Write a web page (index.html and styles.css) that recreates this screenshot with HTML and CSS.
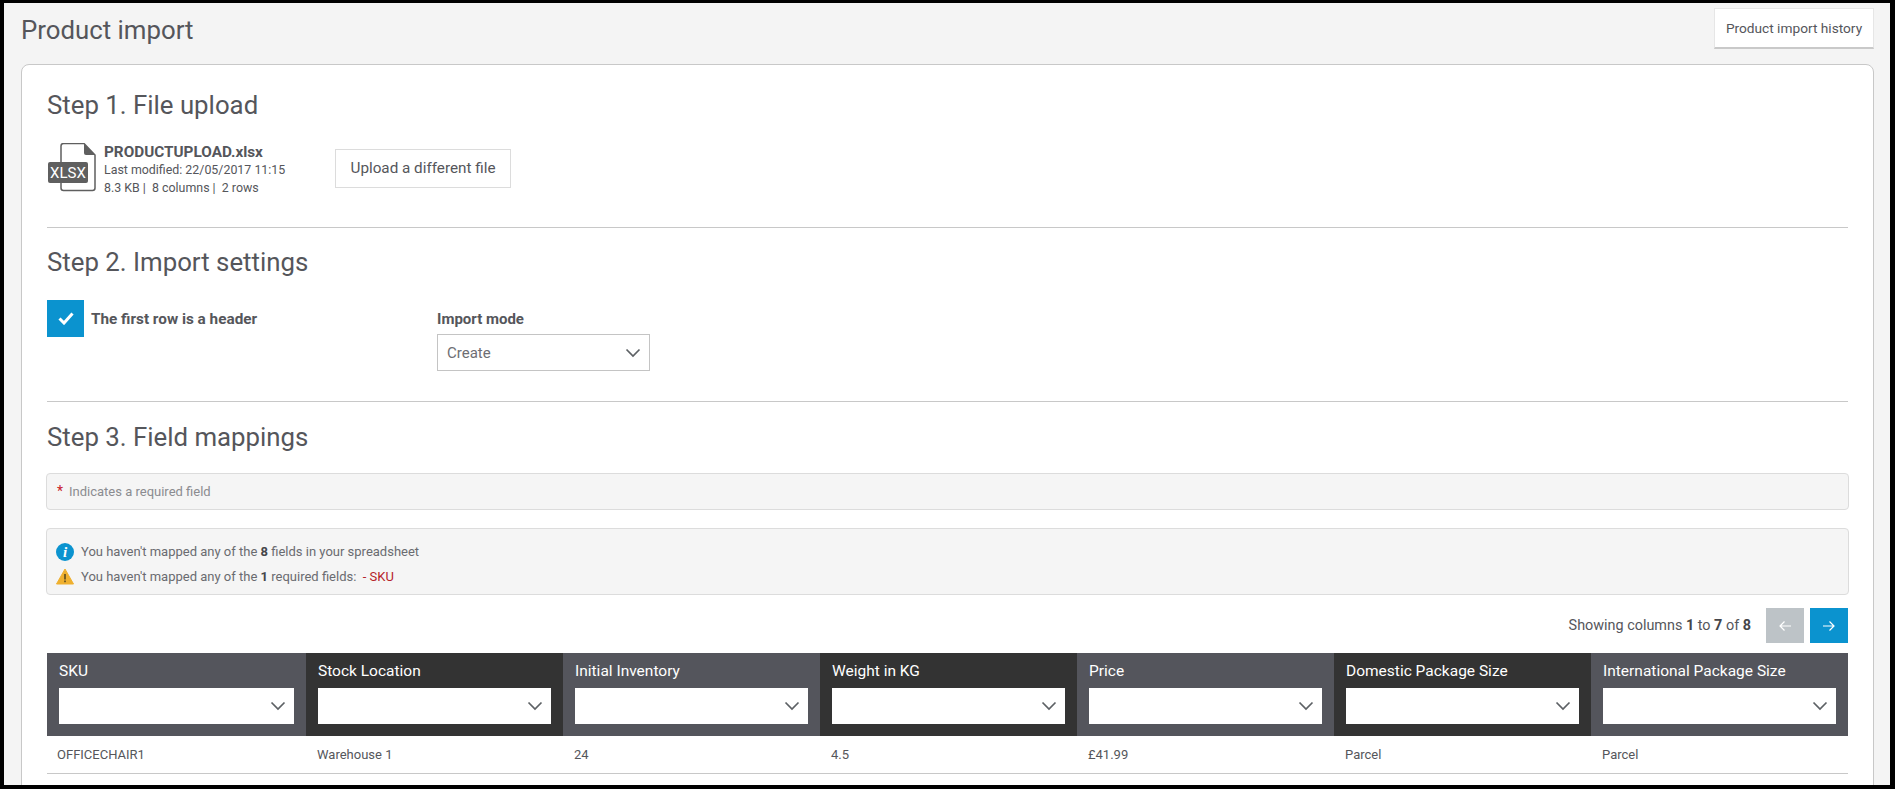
FILE: index.html
```html
<!DOCTYPE html>
<html lang="en">
<head>
  <meta charset="UTF-8">
  <title>Product import</title>
  <link rel="stylesheet" href="styles.css">
</head>
<body>
<div class="frame">
  <div class="page-head">
    <h1>Product import</h1>
    <a class="history-btn">Product import history</a>
  </div>

  <div class="card">
    <section class="step step-file">
      <h2>Step 1. File upload</h2>
      <div class="file-row">
        <svg class="file-icon" width="50" height="49" viewBox="0 0 50 49">
          <path d="M14 3 a2.5 2.5 0 0 1 2.5-2.5 H37 L48 12 V45 a2.5 2.5 0 0 1-2.5 2.5 H16.5 a2.5 2.5 0 0 1-2.5-2.5 Z" fill="#fff" stroke="#5f5f5f" stroke-width="1.5"/>
          <path d="M37 .5 L48 12 H39 a2 2 0 0 1-2-2 Z" fill="#5f5f5f"/>
          <rect x="1" y="19" width="40" height="21" rx="2" fill="#5f5f5f"/>
          <text x="21" y="35" class="file-ext" text-anchor="middle">XLSX</text>
        </svg>
        <div class="file-info">
          <div class="file-name">PRODUCTUPLOAD.xlsx</div>
          <div class="file-meta">Last modified: 22/05/2017 11:15</div>
          <div class="file-meta">8.3 KB | &nbsp;8 columns | &nbsp;2 rows</div>
        </div>
        <a class="upload-btn">Upload a different file</a>
      </div>
    </section>

    <section class="step step-settings">
      <h2>Step 2. Import settings</h2>
      <div class="settings-row">
        <div class="check-group">
          <span class="checkbox">
            <svg width="16" height="13" viewBox="0 0 16 13"><path d="M1.5 6.5 L6 11 L14.5 1.5" fill="none" stroke="#fff" stroke-width="3"/></svg>
          </span>
          <label class="strong-label">The first row is a header</label>
        </div>
        <div class="mode-group">
          <label class="strong-label">Import mode</label>
          <div class="select mode-select">
            <span>Create</span>
            <svg class="chevron" width="16" height="10" viewBox="0 0 16 10"><path d="M1.5 1.5 L8 8 L14.5 1.5" fill="none" stroke="#5d6165" stroke-width="1.7"/></svg>
          </div>
        </div>
      </div>
    </section>

    <section class="step step-mappings">
      <h2>Step 3. Field mappings</h2>
      <div class="note note-required"><span class="req">*</span>Indicates a required field</div>
      <div class="note note-status">
        <div class="status-line">
          <svg width="18" height="18" viewBox="0 0 18 18"><circle cx="9" cy="9" r="9" fill="#0b93cf"/><text x="9" y="14" class="info-i" text-anchor="middle">i</text></svg>
          <span>You haven't mapped any of the <b>8</b> fields in your spreadsheet</span>
        </div>
        <div class="status-line">
          <svg width="18" height="17" viewBox="0 0 18 17"><path d="M9 1 L17.5 16 H0.5 Z" fill="#efb02f" stroke="#efb02f" stroke-linejoin="round"/><rect x="8.2" y="6" width="1.6" height="5.5" fill="#5a4a1e"/><rect x="8.2" y="12.5" width="1.6" height="1.7" fill="#5a4a1e"/></svg>
          <span>You haven't mapped any of the <b>1</b> required fields: &nbsp;<em class="missing">- SKU</em></span>
        </div>
      </div>

      <div class="pager">
        <span>Showing columns <b>1</b> to <b>7</b> of <b>8</b></span>
        <button class="page-btn off"><svg width="14" height="12" viewBox="0 0 14 12"><path d="M13 6 H2 M6.5 1.5 L2 6 L6.5 10.5" fill="none" stroke="#fff" stroke-width="1.2"/></svg></button>
        <button class="page-btn on"><svg width="14" height="12" viewBox="0 0 14 12"><path d="M1 6 H12 M7.5 1.5 L12 6 L7.5 10.5" fill="none" stroke="#fff" stroke-width="1.2"/></svg></button>
      </div>

      <table class="map-table">
        <thead>
          <tr>
            <th><div class="col-name">SKU</div><div class="select"><svg class="chevron" width="16" height="10" viewBox="0 0 16 10"><path d="M1.5 1.5 L8 8 L14.5 1.5" fill="none" stroke="#5d6165" stroke-width="1.7"/></svg></div></th>
            <th><div class="col-name">Stock Location</div><div class="select"><svg class="chevron" width="16" height="10" viewBox="0 0 16 10"><path d="M1.5 1.5 L8 8 L14.5 1.5" fill="none" stroke="#5d6165" stroke-width="1.7"/></svg></div></th>
            <th><div class="col-name">Initial Inventory</div><div class="select"><svg class="chevron" width="16" height="10" viewBox="0 0 16 10"><path d="M1.5 1.5 L8 8 L14.5 1.5" fill="none" stroke="#5d6165" stroke-width="1.7"/></svg></div></th>
            <th><div class="col-name">Weight in KG</div><div class="select"><svg class="chevron" width="16" height="10" viewBox="0 0 16 10"><path d="M1.5 1.5 L8 8 L14.5 1.5" fill="none" stroke="#5d6165" stroke-width="1.7"/></svg></div></th>
            <th><div class="col-name">Price</div><div class="select"><svg class="chevron" width="16" height="10" viewBox="0 0 16 10"><path d="M1.5 1.5 L8 8 L14.5 1.5" fill="none" stroke="#5d6165" stroke-width="1.7"/></svg></div></th>
            <th><div class="col-name">Domestic Package Size</div><div class="select"><svg class="chevron" width="16" height="10" viewBox="0 0 16 10"><path d="M1.5 1.5 L8 8 L14.5 1.5" fill="none" stroke="#5d6165" stroke-width="1.7"/></svg></div></th>
            <th><div class="col-name">International Package Size</div><div class="select"><svg class="chevron" width="16" height="10" viewBox="0 0 16 10"><path d="M1.5 1.5 L8 8 L14.5 1.5" fill="none" stroke="#5d6165" stroke-width="1.7"/></svg></div></th>
          </tr>
        </thead>
        <tbody>
          <tr>
            <td>OFFICECHAIR1</td>
            <td>Warehouse 1</td>
            <td>24</td>
            <td>4.5</td>
            <td>£41.99</td>
            <td>Parcel</td>
            <td>Parcel</td>
          </tr>
        </tbody>
      </table>
    </section>
  </div>
</div>
</body>
</html>
```

FILE: styles.css
```css
* {
  box-sizing: border-box;
}

html, body {
  margin: 0;
  height: 100%;
  overflow: hidden;
}

body {
  font-family: Roboto, "Liberation Sans", sans-serif;
  color: #55565b;
  background: #000;
}

.frame {
  height: 789px;
  border: solid #000;
  border-width: 3px 5px 4px 4px;
  background: #f4f4f4;
  padding: 0 16px 0 17px;
  overflow: hidden;
}

.page-head {
  display: flex;
  justify-content: space-between;
  align-items: flex-start;
  height: 61px;
  padding-top: 5px;
}

h1 {
  margin: 7px 0 0;
  font-size: 25.8px;
  line-height: 30px;
  font-weight: 400;
}

.history-btn {
  width: 160px;
  height: 41px;
  line-height: 38px;
  text-align: center;
  font-size: 13.7px;
  background: #fff;
  border: 1px solid #e6e6e6;
  border-bottom: 2px solid #c9c9c9;
}

.card {
  background: #fff;
  border: 1px solid #c8c8c8;
  border-radius: 8px;
  padding: 0 25px;
  height: 800px;
}

.step {
  border-bottom: 1px solid #c8c8c8;
}

h2 {
  margin: 0;
  font-size: 25.8px;
  line-height: 30px;
  font-weight: 400;
}

.step-file {
  padding: 25px 0 30px;
}

.file-row {
  display: flex;
  align-items: flex-start;
  margin-top: 23px;
}

.file-ext {
  font-family: Roboto, sans-serif;
  font-size: 15px;
  fill: #fff;
}

.file-info {
  margin-left: 7px;
  width: 231px;
}

.file-name {
  font-size: 15.3px;
  line-height: 18px;
  font-weight: 700;
}

.file-meta {
  font-size: 12.4px;
  line-height: 18px;
}

.upload-btn {
  margin-top: 6px;
  width: 176px;
  height: 39px;
  line-height: 37px;
  text-align: center;
  font-size: 15.25px;
  border: 1px solid #dcdcdc;
}

.step-settings {
  padding: 19px 0 30px;
}

.settings-row {
  display: flex;
  align-items: flex-start;
  margin-top: 23px;
}

.check-group {
  display: flex;
  width: 390px;
}

.checkbox {
  display: flex;
  align-items: center;
  justify-content: center;
  width: 37px;
  height: 37px;
  background: #0b93cf;
}

.strong-label {
  display: block;
  font-size: 15px;
  line-height: 18px;
  font-weight: 700;
  margin-top: 10px;
}

.check-group .strong-label {
  margin-left: 7px;
  font-size: 15.3px;
}

.select {
  display: flex;
  align-items: center;
  justify-content: space-between;
  height: 36px;
  padding: 0 8px 0 0;
  background: #fff;
}

.mode-select {
  width: 213px;
  height: 37px;
  margin-top: 6px;
  padding-left: 9px;
  font-size: 15px;
  color: #6d6e73;
  border: 1px solid #c4c4c4;
}

.chevron {
  margin-left: auto;
}

.step-mappings {
  padding-top: 20px;
  border-bottom: 0;
}

.note {
  margin: 0 -1px;
  background: #f5f5f5;
  border: 1px solid #dcdcdc;
  border-radius: 4px;
  font-size: 13px;
}

.note-required {
  margin-top: 21px;
  height: 37px;
  line-height: 35px;
  padding-left: 10px;
  color: #8b8c90;
}

.req {
  display: inline-block;
  width: 12px;
  font-size: 14px;
  color: #c8202a;
}

.note-status {
  margin-top: 18px;
  height: 67px;
  padding: 10px 0 0 9px;
  color: #6a6b70;
}

.status-line {
  display: flex;
  align-items: center;
  gap: 7px;
  height: 25px;
}

.status-line b, .pager b {
  color: #45464a;
}

.info-i {
  font-family: "Liberation Serif", serif;
  font-style: italic;
  font-weight: 700;
  font-size: 15px;
  fill: #fff;
}

.missing {
  font-style: normal;
  color: #b5232b;
}

.pager {
  display: flex;
  justify-content: flex-end;
  align-items: center;
  gap: 6px;
  margin-top: 13px;
  font-size: 14.4px;
}

.pager span {
  margin-right: 9px;
}

.page-btn {
  display: flex;
  align-items: center;
  justify-content: center;
  width: 38px;
  height: 35px;
  padding: 0;
  border: 0;
}

.page-btn.off {
  background: #bdc3c7;
}

.page-btn.on {
  background: #0b93cf;
}

.map-table {
  width: 100%;
  margin-top: 10px;
  table-layout: fixed;
  border-collapse: collapse;
}

.map-table th {
  padding: 8px 12px 12px;
  background: #54555c;
  color: #fff;
  font-size: 15.5px;
  font-weight: 400;
  text-align: left;
}

.map-table th:first-child {
  width: 259px;
}

.map-table th:nth-child(even) {
  background: #333;
}

.col-name {
  height: 27px;
  line-height: 20px;
}

.map-table td {
  height: 37px;
  padding: 0 11px;
  font-size: 13px;
  border-bottom: 1px solid #c8c8c8;
}

.map-table td:first-child {
  padding-left: 10px;
}
```
